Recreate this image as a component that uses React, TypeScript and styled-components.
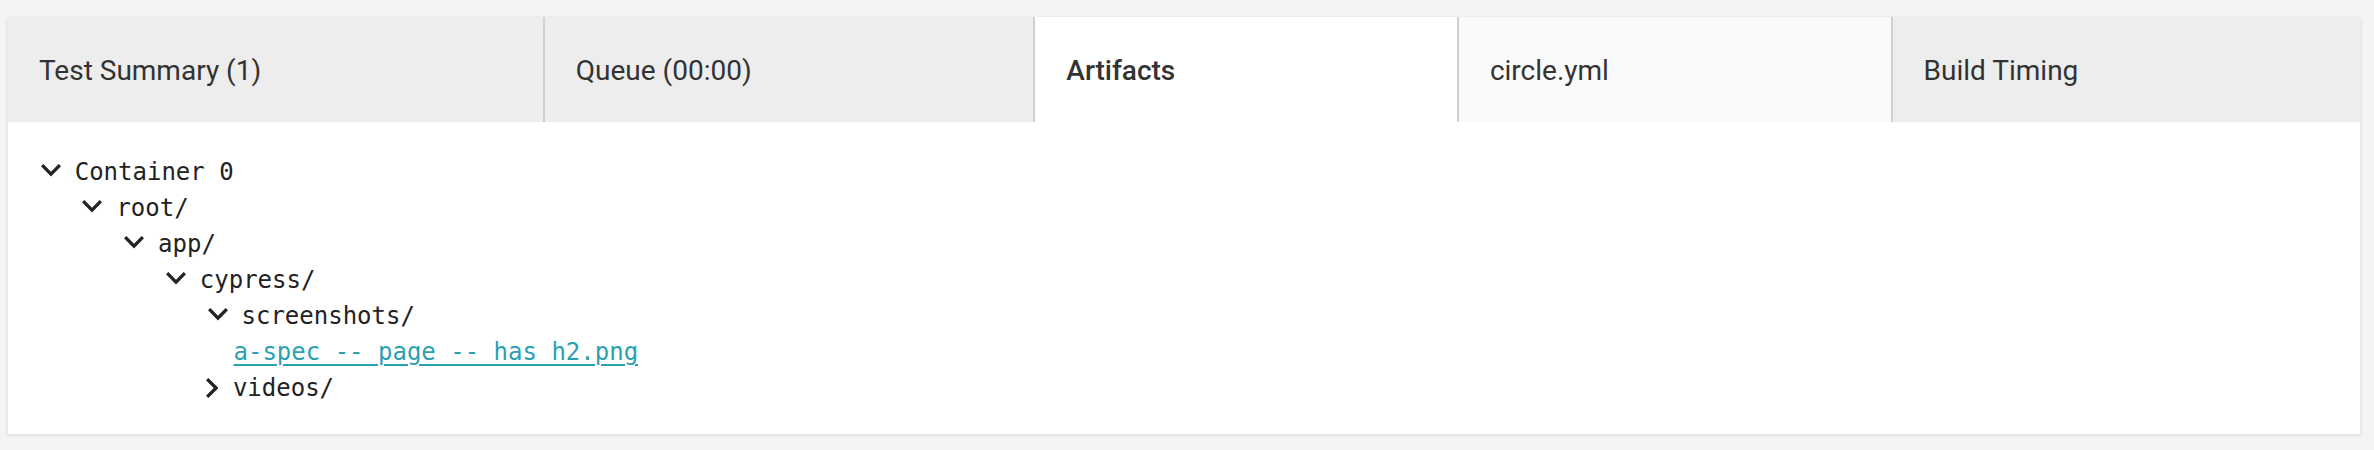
import styled, { createGlobalStyle } from 'styled-components'

const GlobalStyle = createGlobalStyle`
  body {
    margin: 0;
    background: #f4f4f4;
  }
`;

const Page = styled.div`
  padding: 17px 14px 16px 8px;
`;

const Panel = styled.div`
  background: #ffffff;
  box-shadow: 0 1px 4px rgba(0, 0, 0, 0.12);
`;

const TabBar = styled.div`
  display: flex;
  height: 105px;
`;

const Tab = styled.div<{ $state: 'idle' | 'active' | 'hover' }>`
  flex: 1 1 auto;
  display: flex;
  align-items: center;
  padding: 2px 31px 0;
  box-sizing: border-box;
  font-family: Roboto, 'Liberation Sans', sans-serif;
  font-size: 28px;
  color: #333333;
  white-space: nowrap;
  font-weight: ${(p) => (p.$state === 'active' ? 500 : 400)};
  background: ${(p) =>
    p.$state === 'active' ? '#ffffff' : p.$state === 'hover' ? '#fafafa' : '#ededed'};

  & + & {
    border-left: 2px solid #d0d0d0;
  }
`;

const TreeBody = styled.div`
  padding: 32px 0 28px;
  font-family: 'DejaVu Sans Mono', 'Liberation Mono', monospace;
  font-size: 24px;
  color: #222222;
`;

const TreeRow = styled.div<{ $depth: number }>`
  display: flex;
  align-items: center;
  height: 36px;
  padding-left: ${(p) => 32.7 + p.$depth * 41.7}px;
  white-space: pre;
`;

const DownIcon = styled.svg`
  flex: none;
  width: 20px;
  height: 12.4px;
  margin: 0 14px 3px 0;
  fill: #222222;
`;

const RightIcon = styled.svg`
  flex: none;
  width: 12.4px;
  height: 20px;
  margin: 0 15px 0 -2px;
  fill: #222222;
`;

const LeafSpacer = styled.span`
  flex: none;
  width: 26px;
`;

const FileLink = styled.a`
  color: #2aa1b3;
  text-decoration: underline;
  text-decoration-thickness: 2px;
  text-underline-offset: 4px;
  cursor: pointer;
`;

type Node =
  | { kind: 'dir'; name: string; depth: number; open: boolean }
  | { kind: 'file'; name: string; depth: number };

const tree: Node[] = [
  { kind: 'dir', name: 'Container 0', depth: 0, open: true },
  { kind: 'dir', name: 'root/', depth: 1, open: true },
  { kind: 'dir', name: 'app/', depth: 2, open: true },
  { kind: 'dir', name: 'cypress/', depth: 3, open: true },
  { kind: 'dir', name: 'screenshots/', depth: 4, open: true },
  { kind: 'file', name: 'a-spec -- page -- has h2.png', depth: 4 },
  { kind: 'dir', name: 'videos/', depth: 4, open: false },
];

const tabs: { label: string; state: 'idle' | 'active' | 'hover' }[] = [
  { label: 'Test Summary (1)', state: 'idle' },
  { label: 'Queue (00:00)', state: 'idle' },
  { label: 'Artifacts', state: 'active' },
  { label: 'circle.yml', state: 'hover' },
  { label: 'Build Timing', state: 'idle' },
];

const App = () => {
  return (
    <Page>
      <GlobalStyle />
      <Panel>
        <TabBar>
          {tabs.map((t) => (
            <Tab key={t.label} $state={t.state}>
              {t.label}
            </Tab>
          ))}
        </TabBar>
        <TreeBody>
          {tree.map((n, i) => (
            <TreeRow key={i} $depth={n.depth}>
              {n.kind === 'file' ? (
                <>
                  <LeafSpacer />
                  <FileLink>{n.name}</FileLink>
                </>
              ) : (
                <>
                  {n.open ? (
                    <DownIcon viewBox="6 8.59 12 7.41" preserveAspectRatio="none">
                      <path d="M16.59 8.59L12 13.17 7.41 8.59 6 10l6 6 6-6z" />
                    </DownIcon>
                  ) : (
                    <RightIcon viewBox="8.59 6 7.41 12" preserveAspectRatio="none">
                      <path d="M10 6L8.59 7.41 13.17 12l-4.58 4.59L10 18l6-6z" />
                    </RightIcon>
                  )}
                  <span>{n.name}</span>
                </>
              )}
            </TreeRow>
          ))}
        </TreeBody>
      </Panel>
    </Page>
  );
};

export default App;
